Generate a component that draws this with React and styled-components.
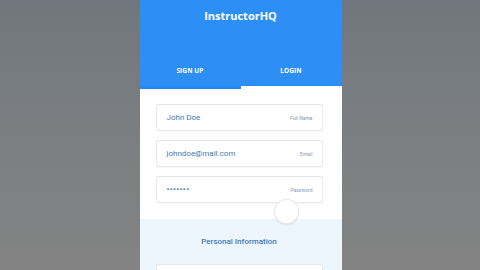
import React from "react";
import styled, { createGlobalStyle } from "styled-components";

const Global = createGlobalStyle`
  html, body {
    margin: 0;
    padding: 0;
    width: 480px;
    height: 270px;
    overflow: hidden;
  }
  body {
    font-family: Roboto, "Liberation Sans", Arial, sans-serif;
    background: linear-gradient(180deg, #6f777e 0%, #7b7e81 45%, #838383 100%);
  }
`;

const Stage = styled.div`
  width: 480px;
  height: 270px;
  display: flex;
  justify-content: center;
  padding-left: 1px;
  box-sizing: border-box;
`;

const Phone = styled.div`
  width: 202px;
  height: 270px;
  background: #ffffff;
  display: flex;
  flex-direction: column;
  overflow: hidden;
`;

const Header = styled.header`
  flex-shrink: 0;
  background: #2d8ef5;
  height: 89px;
  display: flex;
  flex-direction: column;
  box-sizing: border-box;
`;

const Title = styled.h1`
  margin: 0;
  padding-top: 8px;
  height: 16px;
  text-align: center;
  color: #ffffff;
  font-family: "Open Sans", "Liberation Sans", sans-serif;
  font-size: 11px;
  font-weight: 700;
  line-height: 16px;
`;

const Tabs = styled.nav`
  margin-top: auto;
  display: flex;
`;

const Tab = styled.div`
  flex: 1;
  height: 30px;
  display: flex;
  align-items: flex-start;
  justify-content: center;
  padding-top: 7px;
  box-sizing: border-box;
  color: #ffffff;
  font-family: "Open Sans", "Liberation Sans", sans-serif;
  font-size: 6.5px;
  font-weight: 700;
  letter-spacing: 0.1px;
  border-bottom: 3px solid ${(p) => (p.$active ? "#2589f3" : "#ffffff")};
`;

const Form = styled.section`
  flex-shrink: 0;
  position: relative;
  padding: 15px 19px 16px 16px;
  display: flex;
  flex-direction: column;
  gap: 9px;
  background: #ffffff;
`;

const Field = styled.div`
  height: 27px;
  border: 1px solid #e4e8ec;
  border-radius: 2px;
  box-sizing: border-box;
  display: flex;
  align-items: center;
  justify-content: space-between;
  padding: 0 9px 0 10px;
  box-shadow: 0 1px 1px rgba(0, 0, 0, 0.03);
`;

const Value = styled.span`
  color: #4478b5;
  font-size: ${(p) => (p.$dots ? "8px" : "8px")};
  letter-spacing: ${(p) => (p.$dots ? "0.4px" : "0")};
  font-weight: ${(p) => (p.$dots ? 700 : 400)};
`;

const Label = styled.span`
  color: #7f9bbc;
  font-size: 5px;
`;

const Ripple = styled.div`
  position: absolute;
  left: 135px;
  top: 111px;
  width: 23px;
  height: 23px;
  border-radius: 50%;
  background: #ffffff;
  box-shadow: 0 0 0 1px #e6e8ea, 0 1px 3px rgba(0, 0, 0, 0.18);
`;

const Section = styled.section`
  flex: 1;
  background: #eef6fd;
  display: flex;
  flex-direction: column;
  align-items: stretch;
  padding: 17px 19px 0 16px;
`;

const SectionTitle = styled.h2`
  margin: 0;
  text-align: center;
  color: #3e7cbd;
  font-size: 8px;
  font-weight: 500;
  line-height: 12px;
`;

const NextField = styled.div`
  flex-shrink: 0;
  margin-top: 16px;
  height: 20px;
  background: #ffffff;
  border: 1px solid #e4e8ec;
  border-radius: 2px;
`;

export default function App() {
  return (
    <>
      <Global />
      <Stage>
        <Phone>
          <Header>
            <Title>InstructorHQ</Title>
            <Tabs>
              <Tab $active>SIGN UP</Tab>
              <Tab>LOGIN</Tab>
            </Tabs>
          </Header>
          <Form>
            <Field>
              <Value>John Doe</Value>
              <Label>Full Name</Label>
            </Field>
            <Field>
              <Value>johndoe@mail.com</Value>
              <Label>Email</Label>
            </Field>
            <Field>
              <Value $dots>•••••••</Value>
              <Label>Password</Label>
            </Field>
            <Ripple />
          </Form>
          <Section>
            <SectionTitle>Personal Information</SectionTitle>
            <NextField />
          </Section>
        </Phone>
      </Stage>
    </>
  );
}
